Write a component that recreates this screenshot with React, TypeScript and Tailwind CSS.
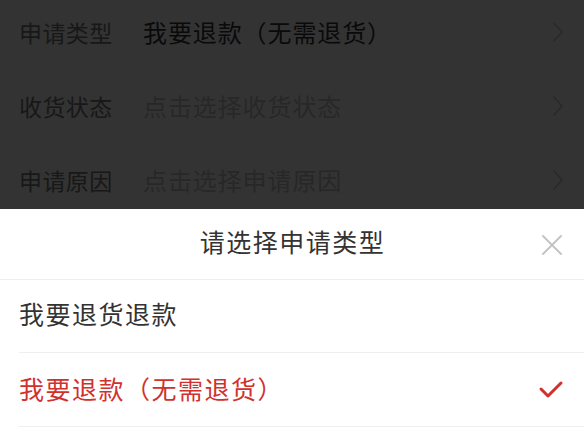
import React from "react";

const font = { fontFamily: '"Noto Sans CJK SC", "Noto Sans", sans-serif' };

function Chevron() {
  return (
    <svg width="12" height="22" viewBox="0 0 12 22" fill="none">
      <path d="M2 2 L10 11 L2 20" stroke="#c8c8c8" strokeWidth="1.6" strokeLinecap="round" strokeLinejoin="round" />
    </svg>
  );
}

function Row({ label, value, placeholder }: { label: string; value: string; placeholder?: boolean }) {
  return (
    <div className="flex h-[74px] items-center pl-[19px] pr-[20px]">
      <div className="w-[124px] text-[23px] text-[#777] tracking-[0.4px]">{label}</div>
      <div className={`flex-1 text-[24px] tracking-[0.9px] ${placeholder ? "text-[#c4c4c4]" : "text-[#333]"}`}>{value}</div>
      <Chevron />
    </div>
  );
}

export default function App() {
  return (
    <div className="relative h-[438px] w-[584px] overflow-hidden bg-white" style={font}>
      <div className="-mt-[5px]">
        <Row label="申请类型" value="我要退款（无需退货）" />
        <Row label="收货状态" value="点击选择收货状态" placeholder />
        <Row label="申请原因" value="点击选择申请原因" placeholder />
      </div>
      <div className="absolute inset-0 bg-black/80" />
      <div className="absolute bottom-0 left-0 right-0 top-[209px] bg-white">
        <div className="relative flex h-[71px] items-center justify-center border-b border-[#efefef] pb-[4px]">
          <div className="text-[25px] tracking-[1.5px] text-[#333] pl-[1px]">请选择申请类型</div>
          <svg className="absolute right-[21px] top-[25px]" width="22" height="22" viewBox="0 0 22 22">
            <path d="M2 2 L20 20 M20 2 L2 20" stroke="#c4c4c4" strokeWidth="2" strokeLinecap="round" />
          </svg>
        </div>
        <div className="ml-[19px] flex h-[73px] items-center border-b border-[#efefef] pb-[4px] text-[25px] tracking-[1.5px] text-[#333]">
          我要退货退款
        </div>
        <div className="ml-[19px] flex h-[74px] items-center justify-between border-b border-[#efefef] pb-[2px] pr-[20px] text-[25px] tracking-[1.5px] text-[#d0312d]">
          <span>我要退款（无需退货）</span>
          <svg width="26" height="22" viewBox="0 0 26 22">
            <path d="M3 11 L10 18 L23 5" stroke="#d0312d" strokeWidth="3" fill="none" strokeLinecap="round" strokeLinejoin="round" />
          </svg>
        </div>
      </div>
    </div>
  );
}
